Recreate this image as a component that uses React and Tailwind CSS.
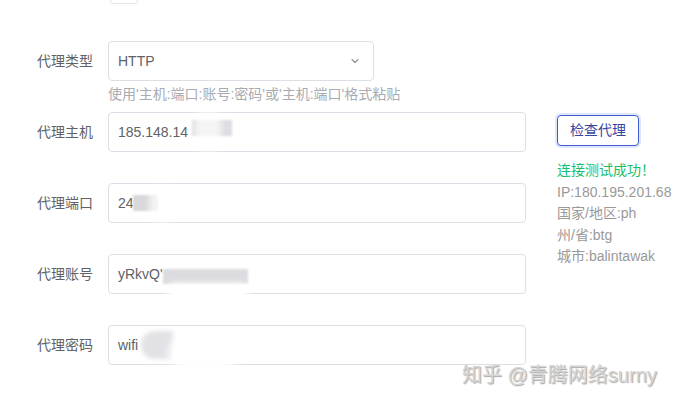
import React from "react";

const font = { fontFamily: '"Liberation Sans", "Noto Sans CJK SC", sans-serif' };

function Label({ children }) {
  return (
    <div className="w-[108px] shrink-0 pr-[15px] text-right text-[14px] text-[#606266]">
      {children}
    </div>
  );
}

function Input({ value, children }) {
  return (
    <div className="relative flex h-[40px] w-[418px] items-center rounded-[4px] border border-[#dcdfe6] bg-white pl-[9px] text-[14px] text-[#606266]">
      <span>{value}</span>
      {children}
    </div>
  );
}

export default function App() {
  return (
    <div className="relative h-[405px] w-[676px] overflow-hidden bg-white" style={font}>
      <div className="ml-[110px] mt-[-16px] h-[20px] w-[28px] rounded-[3px] border border-[#e4e4e4]" />
      <div className="mt-[37px] flex">
        <div className="flex w-[526px] flex-col">
          <div className="flex h-[40px] items-center">
            <Label>代理类型</Label>
            <div className="flex h-[40px] w-[266px] items-center justify-between rounded-[4px] border border-[#dcdfe6] pl-[9px] pr-[12px] text-[14px] text-[#606266]">
              <span>HTTP</span>
              <svg width="12" height="12" viewBox="0 0 12 12" fill="none">
                <path d="M3 4.5 L6 7.5 L9 4.5" stroke="#8a8d94" strokeWidth="1.1" strokeLinecap="round" strokeLinejoin="round" />
              </svg>
            </div>
          </div>
          <div className="ml-[108px] h-[31px] text-[14px] leading-[26px] text-[#a8abb2]">
            使用'主机:端口:账号:密码'或'主机:端口'格式粘贴
          </div>
          <div className="flex flex-col gap-[31px]">
            <div className="flex items-center">
              <Label>代理主机</Label>
              <Input value="185.148.14">
                <span className="absolute left-[83px] top-[7px] h-[16px] w-[40px] bg-[#dedee2] blur-[1px]" />
                <span className="absolute left-[86px] top-[-3px] h-[42px] w-[26px] rounded-full bg-white/70 blur-[3px]" />
              </Input>
            </div>
            <div className="flex items-center">
              <Label>代理端口</Label>
              <Input value="24">
                <span className="absolute left-[24px] top-[11px] h-[16px] w-[25px] bg-[#d8d8dc] blur-[1px]" />
                <span className="absolute left-[40px] top-[2px] h-[38px] w-[26px] rounded-full bg-white/70 blur-[3px]" />
              </Input>
            </div>
            <div className="flex items-center">
              <Label>代理账号</Label>
              <Input value="yRkvQ'">
                <span className="absolute left-[54px] top-[14px] h-[15px] w-[85px] bg-[#dcdce0] blur-[1px]" />
                <span className="absolute left-[58px] top-[28px] h-[16px] w-[82px] rounded-full bg-white blur-[3px]" />
              </Input>
            </div>
            <div className="flex items-center">
              <Label>代理密码</Label>
              <Input value="wifi">
                <span className="absolute left-[32px] top-[5px] h-[28px] w-[32px] rounded-l-full bg-[#e2e2e6] blur-[2px]" />
                <span className="absolute left-[60px] top-[10px] h-[34px] w-[70px] rounded-full bg-white blur-[4px]" />
              </Input>
            </div>
          </div>
        </div>
        <div className="ml-[31px] flex flex-col pt-[74px]">
          <button className="h-[31px] w-[82px] rounded-[4px] border border-[#3f5bd1] bg-white text-[14px] text-[#34479e] shadow-[0_0_0_2px_#e0e6fb]">
            检查代理
          </button>
          <div className="mt-[14px] flex flex-col whitespace-nowrap text-[14px] leading-[21.5px]">
            <span className="text-[#19be6b]">连接测试成功！</span>
            <span className="text-[#999]">IP:180.195.201.68</span>
            <span className="text-[#999]">国家/地区:ph</span>
            <span className="text-[#999]">州/省:btg</span>
            <span className="text-[#999]">城市:balintawak</span>
          </div>
        </div>
      </div>
      <div
        className="absolute left-[462px] top-[361px] whitespace-nowrap text-[20px] leading-[28px] text-[#d4d4d4]"
        style={{ textShadow: "1px 1px 1px rgba(0,0,0,0.35)" }}
      >
        知乎 @青腾网络surny
      </div>
    </div>
  );
}
